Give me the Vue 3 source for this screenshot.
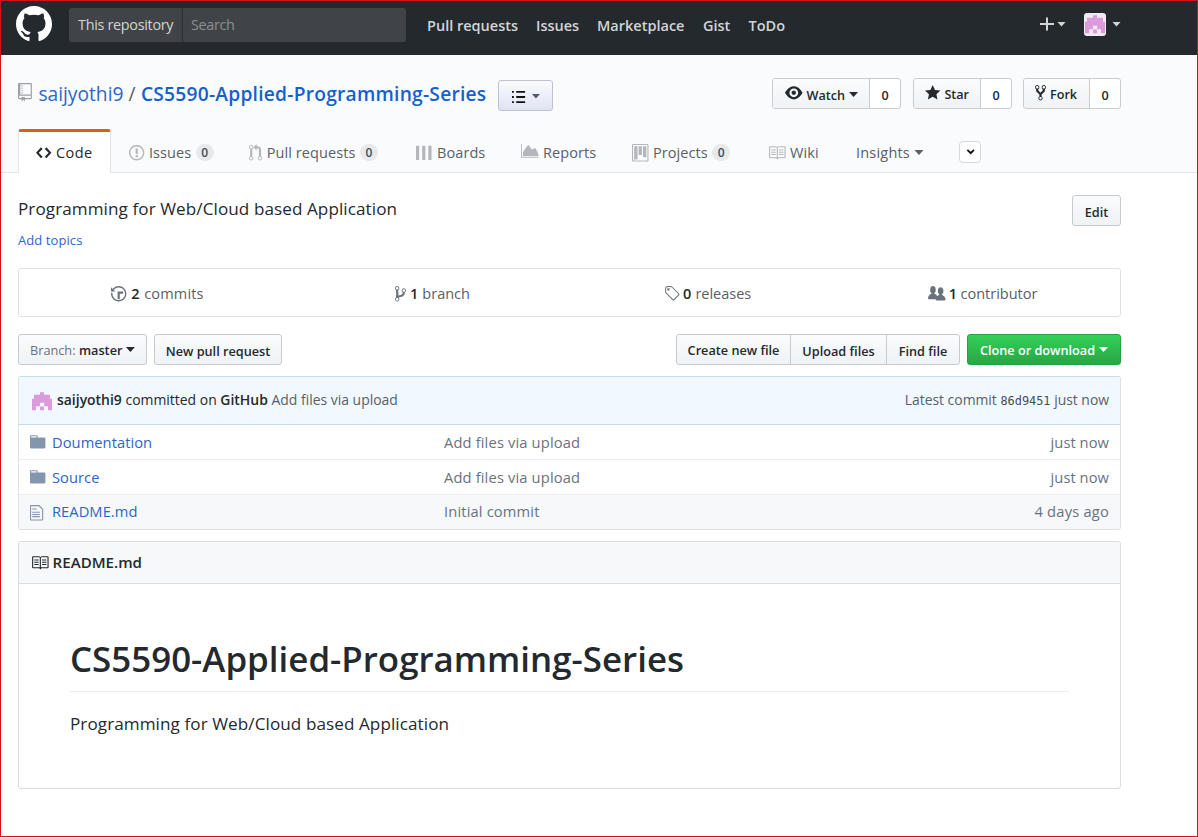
<script setup>
import { h } from 'vue'

const glyphs = {
  mark: [16, 'M8 0C3.58 0 0 3.58 0 8c0 3.54 2.29 6.53 5.47 7.59.4.07.55-.17.55-.38 0-.19-.01-.82-.01-1.49-2.01.37-2.53-.49-2.69-.94-.09-.23-.48-.94-.82-1.13-.28-.15-.68-.52-.01-.53.63-.01 1.08.58 1.23.82.72 1.21 1.87.87 2.33.66.07-.52.28-.87.51-1.07-1.78-.2-3.64-.89-3.64-3.95 0-.87.31-1.59.82-2.15-.08-.2-.36-1.02.08-2.12 0 0 .67-.21 2.2.82.64-.18 1.32-.27 2-.27.68 0 1.36.09 2 .27 1.53-1.04 2.2-.82 2.2-.82.44 1.1.16 1.92.08 2.12.51.56.82 1.27.82 2.15 0 3.07-1.87 3.75-3.65 3.95.29.25.54.73.54 1.48 0 1.07-.01 1.93-.01 2.2 0 .21.15.46.55.38A8.013 8.013 0 0 0 16 8c0-4.42-3.58-8-8-8z'],
  repo: [12, 'M4 9H3V8h1v1zm0-3H3v1h1V6zm0-2H3v1h1V4zm0-2H3v1h1V2zm8-1v12c0 .55-.45 1-1 1H6v2l-1.5-1.5L3 16v-2H1c-.55 0-1-.45-1-1V1c0-.55.45-1 1-1h10c.55 0 1 .45 1 1zm-1 10H1v2h2v-1h3v1h5v-2zm0-10H2v9h9V1z'],
  code: [14, 'M9.5 3L8 4.5 11.5 8 8 11.5 9.5 13 14 8 9.5 3zm-5 0L0 8l4.5 5L6 11.5 2.5 8 6 4.5 4.5 3z'],
  issue: [14, 'M7 2.3c3.14 0 5.7 2.56 5.7 5.7s-2.56 5.7-5.7 5.7A5.71 5.71 0 0 1 1.3 8c0-3.14 2.56-5.7 5.7-5.7zM7 1C3.14 1 0 4.14 0 8s3.14 7 7 7 7-3.14 7-7-3.14-7-7-7zm1 3H6v5h2V4zm0 6H6v2h2v-2z'],
  pull: [12, 'M11 11.28V5c-.03-.78-.34-1.47-.94-2.06C9.46 2.35 8.78 2.03 8 2H7V0L4 3l3 3V4h1c.27.02.48.11.69.31.21.2.3.42.31.69v6.28A1.993 1.993 0 0 0 10 15a1.993 1.993 0 0 0 1-3.72zm-1 2.92c-.66 0-1.2-.55-1.2-1.2 0-.65.55-1.2 1.2-1.2.65 0 1.2.55 1.2 1.2 0 .65-.55 1.2-1.2 1.2zM4 3c0-1.11-.89-2-2-2a1.993 1.993 0 0 0-1 3.72v6.56A1.993 1.993 0 0 0 2 15a1.993 1.993 0 0 0 1-3.72V4.72c.59-.34 1-.98 1-1.72zm-.8 10c0 .66-.55 1.2-1.2 1.2-.65 0-1.2-.55-1.2-1.2 0-.65.55-1.2 1.2-1.2.65 0 1.2.55 1.2 1.2zM2 4.2C1.34 4.2.8 3.65.8 3c0-.65.55-1.2 1.2-1.2.65 0 1.2.55 1.2 1.2 0 .65-.55 1.2-1.2 1.2z'],
  boards: [15, 'M0 1.6h2.9v13H0zM5.6 1.6h2.9v13H5.6zM11.2 1.6h2.9v13h-2.9z'],
  reports: [16, 'M0 0h.8v11.6H16v.9H0zM1.8 10.8V7.4L5.2 2.2 6.6 1l1.6 1.6 1.6 2.6 2-1.4h1.4l2.2 4.4.6 2.6z'],
  project: [15, 'M10 12h3V2h-3v10zm-4-2h3V2H6v8zm-4 4h3V2H2v12zm-1 1h13V1H1v14zM14 0H1a1 1 0 0 0-1 1v14a1 1 0 0 0 1 1h13a1 1 0 0 0 1-1V1a1 1 0 0 0-1-1z'],
  book: [16, 'M3 5h4v1H3V5zm0 3h4V7H3v1zm0 2h4V9H3v1zm11-5h-4v1h4V5zm0 2h-4v1h4V7zm0 2h-4v1h4V9zm2-6v9c0 .55-.45 1-1 1H9.5l-1 1-1-1H2c-.55 0-1-.45-1-1V3c0-.55.45-1 1-1h5.5l1 1 1-1H15c.55 0 1 .45 1 1zm-8 .5L7.5 3H2v9h6V3.5zm7-.5H9.5l-.5.5V12h6V3z'],
  eye: [16, 'M8.06 2C3 2 0 8 0 8s3 6 8.06 6C13 14 16 8 16 8s-3-6-7.94-6zM8 12c-2.2 0-4-1.78-4-4 0-2.2 1.8-4 4-4 2.22 0 4 1.8 4 4 0 2.22-1.78 4-4 4zm2-4c0 1.11-.89 2-2 2-1.11 0-2-.89-2-2 0-1.11.89-2 2-2 1.11 0 2 .89 2 2z'],
  star: [14, 'M14 6l-4.9-.64L7 1 4.9 5.36 0 6l3.6 3.26L2.67 14 7 11.67 11.33 14l-.93-4.74L14 6z'],
  fork: [10, 'M8 1a1.993 1.993 0 0 0-1 3.72V6L5 8 3 6V4.72A1.993 1.993 0 0 0 2 1a1.993 1.993 0 0 0-1 3.72V6.5l3 3v1.78A1.993 1.993 0 0 0 5 15a1.993 1.993 0 0 0 1-3.72V9.5l3-3V4.72A1.993 1.993 0 0 0 8 1zM2 4.2C1.34 4.2.8 3.65.8 3c0-.65.55-1.2 1.2-1.2.65 0 1.2.55 1.2 1.2 0 .65-.55 1.2-1.2 1.2zm3 10c-.66 0-1.2-.55-1.2-1.2 0-.65.55-1.2 1.2-1.2.65 0 1.2.55 1.2 1.2 0 .65-.55 1.2-1.2 1.2zm3-10c-.66 0-1.2-.55-1.2-1.2 0-.65.55-1.2 1.2-1.2.65 0 1.2.55 1.2 1.2 0 .65-.55 1.2-1.2 1.2z'],
  history: [14, 'M8 13H6V6h5v2H8v5zM7 1C4.81 1 2.87 2.02 1.59 3.59L0 2v4h4L2.5 4.5C3.55 3.17 5.17 2.3 7 2.3c3.14 0 5.7 2.56 5.7 5.7s-2.56 5.7-5.7 5.7A5.71 5.71 0 0 1 1.3 8c0-.34.03-.67.09-1H.08C.03 7.33 0 7.66 0 8c0 3.86 3.14 7 7 7s7-3.14 7-7-3.14-7-7-7z'],
  branch: [10, 'M10 5c0-1.11-.89-2-2-2a1.993 1.993 0 0 0-1 3.72v.3c-.02.52-.23.98-.63 1.38-.4.4-.86.61-1.38.63-.83.02-1.48.16-2 .45V4.72a1.993 1.993 0 0 0-1-3.72C.88 1 0 1.89 0 3a2 2 0 0 0 1 1.72v6.56c-.59.35-1 .99-1 1.72 0 1.11.89 2 2 2 1.11 0 2-.89 2-2 0-.53-.2-1-.53-1.36.09-.06.48-.41.59-.47.25-.11.56-.17.94-.17 1.05-.05 1.95-.45 2.75-1.25S8.95 7.77 9 6.73h-.02C9.59 6.37 10 5.73 10 5zM2 1.8c.66 0 1.2.55 1.2 1.2 0 .65-.55 1.2-1.2 1.2C1.35 4.2.8 3.65.8 3c0-.65.55-1.2 1.2-1.2zm0 12.41c-.66 0-1.2-.55-1.2-1.2 0-.65.55-1.2 1.2-1.2.65 0 1.2.55 1.2 1.2 0 .65-.55 1.2-1.2 1.2zm6-8c-.66 0-1.2-.55-1.2-1.2 0-.65.55-1.2 1.2-1.2.65 0 1.2.55 1.2 1.2 0 .65-.55 1.2-1.2 1.2z'],
  tag: [14, 'M7.73 1.73C7.26 1.26 6.62 1 5.96 1H3.5C2.13 1 1 2.13 1 3.5v2.47c0 .66.27 1.3.73 1.77l6.06 6.06c.39.39 1.02.39 1.41 0l4.59-4.59a.996.996 0 0 0 0-1.41L7.73 1.73zM2.38 7.09c-.31-.3-.47-.7-.47-1.13V3.5c0-.88.72-1.59 1.59-1.59h2.47c.42 0 .83.16 1.13.47l6.14 6.13-4.73 4.73-6.13-6.15zM3.01 3h2v2H3V3h.01z'],
  people: [16, 'M16 12.999c0 .439-.45 1-1 1H7.995c-.539 0-.994-.447-.995-.999H1c-.54 0-1-.561-1-1 0-2.634 3-4 3-4s.229-.409 0-1c-.841-.621-1.058-.59-1-3 .058-2.419 1.367-3 2.5-3s2.442.58 2.5 3c.058 2.41-.159 2.379-1 3-.229.59 0 1 0 1s1.549.711 2.42 2.088C9.196 9.369 10 8.999 10 8.999s.229-.409 0-1c-.841-.62-1.058-.59-1-3 .058-2.419 1.367-3 2.5-3s2.437.581 2.495 3c.059 2.41-.158 2.38-1 3-.229.59 0 1 0 1s3.005 1.366 3.005 4z'],
  folder: [14, 'M13 4H7V3c0-.66-.31-1-1-1H1c-.55 0-1 .45-1 1v10c0 .55.45 1 1 1h12c.55 0 1-.45 1-1V5c0-.55-.45-1-1-1zM6 4H1V3h5v1z'],
  file: [12, 'M6 5H2V4h4v1zM2 8h7V7H2v1zm0 2h7V9H2v1zm0 2h7v-1H2v1zm10-7.5V14c0 .55-.45 1-1 1H1c-.55 0-1-.45-1-1V2c0-.55.45-1 1-1h7.5L12 4.5zM11 5L8 2H1v12h10V5z'],
  list: [14, 'M0 2h2v2H0zM4.5 2H14v2H4.5zM0 7.5h2v2H0zM4.5 7.5H14v2H4.5zM0 13h2v2H0zM4.5 13H14v2H4.5z'],
  plus: [14, 'M6 1.5h2V7h6v2H8v5.5H6V9H0V7h6z'],
  avatar: [16, 'M6.4 1h3.2v2h4.8v3.2H16v9.2h-3.2v-3.2h-3V9.4H6.4v2.8H3.2v3.2H0V6.2h1.6V3h4.8zM6.4 12.4h3.2v3H6.4z'],
  chevron: [10, 'M.8 5.8l1.3-1.3L5 7.2l2.9-2.7 1.3 1.3L5 10z'],
}

const Icon = (props) =>
  h('svg', { class: 'icon', width: (glyphs[props.name][0] * props.size) / 16, height: props.size, viewBox: `0 0 ${glyphs[props.name][0]} 16` }, [
    h('path', { d: glyphs[props.name][1], 'fill-rule': 'evenodd' }),
  ])
Icon.props = { name: String, size: { type: Number, default: 17.6 } }

const tabs = [
  { id: 'issues', icon: 'issue', label: 'Issues', count: 0 },
  { id: 'pulls', icon: 'pull', label: 'Pull requests', count: 0 },
  { id: 'boards', icon: 'boards', label: 'Boards' },
  { id: 'reports', icon: 'reports', label: 'Reports' },
  { id: 'projects', icon: 'project', label: 'Projects', count: 0 },
  { id: 'wiki', icon: 'book', label: 'Wiki' },
]
const stats = [
  { icon: 'history', n: 2, label: 'commits' },
  { icon: 'branch', n: 1, label: 'branch' },
  { icon: 'tag', n: 0, label: 'releases' },
  { icon: 'people', n: 1, label: 'contributor' },
]
const files = [
  { icon: 'folder', name: 'Doumentation', msg: 'Add files via upload', age: 'just now' },
  { icon: 'folder', name: 'Source', msg: 'Add files via upload', age: 'just now' },
  { icon: 'file', name: 'README.md', msg: 'Initial commit', age: '4 days ago' },
]
</script>

<template>
  <div class="page">
    <header class="topbar">
      <Icon name="mark" :size="36" class="logo" />
      <div class="search"><span class="scope">This repository</span><span class="query">Search</span></div>
      <nav class="topnav">
        <a class="n-pull">Pull requests</a><a class="n-issues">Issues</a><a class="n-market">Marketplace</a><a class="n-gist">Gist</a><a>ToDo</a>
      </nav>
      <div class="user">
        <Icon name="plus" :size="16" class="plus" /><i class="caret"></i>
        <span class="avatar"><Icon name="avatar" :size="20" /></span><i class="caret"></i>
      </div>
    </header>

    <section class="repohead">
      <div class="titlerow">
        <Icon name="repo" :size="18.5" class="repoicon" />
        <a class="owner">saijyothi9</a><span class="slash">/</span><a class="repo">CS5590-Applied-Programming-Series</a>
        <button class="listbtn"><Icon name="list" :size="15" /><i class="caret"></i></button>
        <div class="actions">
          <div class="social watch"><span class="act"><Icon name="eye" /><b>Watch</b><i class="caret"></i></span><span class="num">0</span></div>
          <div class="social star"><span class="act"><Icon name="star" /><b>Star</b></span><span class="num">0</span></div>
          <div class="social fork"><span class="act"><Icon name="fork" /><b>Fork</b></span><span class="num">0</span></div>
        </div>
      </div>
      <nav class="tabs">
        <a class="tab code"><Icon name="code" /><span>Code</span></a>
        <a v-for="t in tabs" :key="t.id" class="tab" :class="t.id">
          <Icon :name="t.icon" /><span>{{ t.label }}</span><em v-if="t.count !== undefined">{{ t.count }}</em>
        </a>
        <a class="tab insights"><span>Insights</span><i class="caret"></i></a>
        <button class="more"><Icon name="chevron" :size="15" /></button>
      </nav>
    </section>

    <main class="content">
      <div class="about">
        <div>
          <p class="desc">Programming for Web/Cloud based Application</p>
          <a class="topics">Add topics</a>
        </div>
        <button class="btn edit">Edit</button>
      </div>

      <div class="stats">
        <div v-for="s in stats" :key="s.icon" class="stat" :class="s.icon"><Icon :name="s.icon" /><b>{{ s.n }}</b><span>{{ s.label }}</span></div>
      </div>

      <div class="toolbar">
        <button class="btn branchbtn"><span class="muted">Branch:</span><span>master</span><i class="caret"></i></button>
        <button class="btn newpr">New pull request</button>
        <div class="group">
          <button class="btn create">Create new file</button>
          <button class="btn upload">Upload files</button>
          <button class="btn find">Find file</button>
        </div>
        <button class="btn clone"><span>Clone or download</span><i class="caret"></i></button>
      </div>

      <div class="filebox">
        <div class="commit">
          <Icon name="avatar" :size="20" class="pic" />
          <div class="who"><b>saijyothi9</b> committed on <b>GitHub</b> <span>Add files via upload</span></div>
          <div class="latest">Latest commit <code>86d9451</code> just now</div>
        </div>
        <div v-for="f in files" :key="f.name" class="row" :class="f.icon">
          <span class="ico"><Icon :name="f.icon" /></span>
          <a class="fname">{{ f.name }}</a><span class="msg">{{ f.msg }}</span><span class="age">{{ f.age }}</span>
        </div>
      </div>

      <article class="readme">
        <h3><Icon name="book" /><span>README.md</span></h3>
        <div class="body">
          <h1>CS5590-Applied-Programming-Series</h1>
          <p>Programming for Web/Cloud based Application</p>
        </div>
      </article>
    </main>
  </div>
</template>

<style>
body { margin: 0; background: #fff; }
</style>

<style scoped>
.page, .page * { box-sizing: border-box; }
.page { width: 1198px; height: 837px; border: 1px solid #d01418; overflow: hidden; background: #fff; color: #24292e; font: 14.5px/22px "Open Sans", "Noto Sans", sans-serif; white-space: nowrap; }
button { font-family: inherit; color: inherit; margin: 0; }
b { font-weight: 600; }
p, h1, h3 { margin: 0; }
.icon { display: block; flex: none; fill: currentColor; overflow: visible; }
.caret { flex: none; width: 9px; height: 5px; background: currentColor; clip-path: polygon(0 0, 100% 0, 50% 100%); }

.topbar { height: 54px; background: #24292e; display: flex; align-items: flex-start; padding-left: 15px; color: #d3d4d5; }
.logo { color: #fff; margin-top: 5px; }
.search { display: flex; width: 337px; height: 34px; margin: 7px 0 0 17px; border-radius: 3px; background: #404448; line-height: 34px; overflow: hidden; }
.scope { width: 114px; padding-left: 9px; border-right: 1px solid #2b3035; font-size: 14.4px; letter-spacing: -.3px; color: #d3d5d6; }
.query { padding-left: 8px; font-size: 14.4px; letter-spacing: -.35px; color: #8b8f92; }
.topnav { display: flex; margin: 13px 0 0 21px; font-weight: 600; font-size: 14.5px; line-height: 24px; }
.n-pull { width: 109px; } .n-issues { width: 61px; } .n-market { width: 106px; } .n-gist { width: 45.5px; }
.user { display: flex; align-items: center; height: 26px; margin: 10px 76px 0 auto; }
.plus { margin-right: 3px; }
.avatar { display: flex; align-items: center; justify-content: center; width: 22px; height: 23px; border-radius: 3px; background: #f2eaf2; color: #dc9bdc; margin: 0 6px 0 18px; overflow: hidden; }

.repohead { height: 118px; background: #fafbfc; border-bottom: 1px solid #e1e4e8; display: flex; flex-direction: column; justify-content: space-between; padding-left: 17px; }
.titlerow { display: flex; align-items: flex-start; width: 1103px; padding-top: 23px; font-size: 19.2px; line-height: 32px; color: #0366d6; }
.repoicon { color: #9da2a8; margin-top: 5px; }
.owner { width: 90px; margin-left: 6.5px; color: #2d66c8; }
.slash { width: 12.5px; color: #586069; }
.repo { width: 357px; font-weight: 600; color: #1460cc; letter-spacing: .24px; }
.listbtn { display: flex; align-items: center; justify-content: center; gap: 6px; width: 55px; height: 31px; margin-top: 2px; padding: 2px 0 0 2px; border: 1px solid #bcc2cf; border-radius: 3px; background: linear-gradient(#fafbfe, #dfe4f4); color: #111; }
.listbtn .caret { color: #555b63; margin-top: -1px; }
.actions { display: flex; margin-left: auto; font-size: 12.6px; line-height: 31px; color: #24292e; }
.social { display: flex; height: 31px; border: 1px solid #c9cccf; border-radius: 3px; background: #fff; overflow: hidden; }
.watch { width: 129px; margin-right: 12px; } .star { width: 99px; margin-right: 11px; } .fork { width: 98px; }
.act { display: flex; flex: 1; border-right: 1px solid #c9cccf; background: linear-gradient(#fafbfc, #eff3f6); padding-left: 12px; }
.star .act, .fork .act { padding-left: 11px; }
.act .icon { margin-top: 5px; }
.act b { margin-left: 4px; }
.watch .act b { line-height: 33px; }
.act .caret { margin: 13px 0 0 4px; }
.num { width: 30px; text-align: center; font-weight: 600; line-height: 33px; }

.tabs { display: flex; height: 44px; margin-bottom: -1px; color: #586069; }
.tab { display: flex; align-items: center; padding-top: 3px; gap: 4.5px; flex: none; letter-spacing: .08px; }
.tab .icon { color: #b3b7bb; }
.tab em { width: 18px; height: 17px; border-radius: 9px; background: #e8e9eb; color: #444d56; text-align: center; font: 600 12px/17px "Open Sans", sans-serif; }
.code { width: 93px; margin-right: 18px; padding: 0 0 0 17px; border: 1px solid #e1e4e8; border-top: 3px solid #d9600f; border-bottom: 0; border-radius: 3px 3px 0 0; background: #fff; color: #24292e; letter-spacing: .5px; }
.code .icon { color: #24292e; }
.issues { width: 119px; } .pulls { width: 168px; padding-left: 1px; } .boards { width: 105px; } .reports { width: 111px; } .projects { width: 136px; } .wiki { width: 88px; } .insights { width: 103px; letter-spacing: .2px; }
.more { display: flex; align-items: center; justify-content: center; width: 22px; height: 22px; margin-top: 12px; padding: 0 0 0 1px; border: 1px solid #d5d9dd; border-radius: 4px; background: #fff; color: #111; }

.content { width: 1103px; margin-left: 17px; }
.about { display: flex; justify-content: space-between; height: 95px; padding-top: 22px; }
.desc { font-size: 17.1px; line-height: 28px; letter-spacing: .08px; }
.topics { display: block; margin-top: 6px; font-size: 13px; letter-spacing: .08px; color: #2d66c8; }
.btn { display: flex; align-items: center; justify-content: center; height: 31px; padding: 2px 0 0; border: 1px solid #c6cacd; border-radius: 3px; background: linear-gradient(#fafbfc, #eff3f6); font-size: 12.7px; font-weight: 600; line-height: 20px; flex: none; }
.edit { width: 49px; }
.stats { display: flex; height: 49px; border: 1px solid #dfe2e5; border-radius: 3px; }
.stat { display: flex; flex: 1; align-items: center; justify-content: center; gap: 4px; color: #586069; padding-top: 2px; }
.stat.history { letter-spacing: .15px; gap: 4.5px; padding-left: 1px; }
.stat.people { gap: 3.5px; }
.stat b { color: #24292e; }
.stat .icon { color: #6a737d; }
.toolbar { display: flex; margin: 17px 0 11px; }
.branchbtn { width: 129px; gap: 3.5px; padding-top: 0; } .muted { color: #6a737d; font-weight: 400; }
.newpr { width: 128px; margin-left: 7px; }
.group { display: flex; margin-left: auto; }
.create { width: 115px; border-radius: 3px 0 0 3px; padding-top: 0; } .upload { width: 97px; border-radius: 0; margin-left: -1px; } .find { width: 74px; border-radius: 0 3px 3px 0; margin-left: -1px; }
.clone { width: 154px; margin-left: 7px; gap: 4px; padding-top: 0; color: #fff; border-color: #28a03e; background: linear-gradient(#34d058, #28a745); }

.filebox { border: 1px solid #dfe2e5; border-top-color: #c8dcf0; border-radius: 3px; overflow: hidden; }
.commit { display: flex; align-items: center; height: 48px; padding: 0 11px 2px 13px; background: #f1f8ff; border-bottom: 1px solid #c8dcf0; font-size: 13.95px; }
.pic { color: #dc9bdc; margin-top: 2px; }
.who { margin-left: 5px; } .who span { color: #586069; }
.latest { margin-left: auto; color: #586069; font-size: 13.9px; }
.latest code { font: 11.9px "DejaVu Sans Mono", monospace; color: #444d56; }
.row { display: flex; align-items: center; height: 35px; padding: 0 11px 1px; border-bottom: 1px solid #eaecef; font-size: 14.7px; letter-spacing: .05px; }
.row:last-child { height: 34px; padding-bottom: 0; border: 0; background: #f6f8fa; }
.row:last-child .fname, .row:last-child .msg, .row:last-child .age { line-height: 21px; padding-bottom: 1px; }
.ico { width: 22px; padding-top: 1px; color: #8496ae; }
.fname { width: 392px; color: #2d66c8; }
.msg, .age { color: #6a737d; }
.msg { letter-spacing: .15px; }
.age { margin-left: auto; }
.file .age { letter-spacing: .2px; }

.readme { height: 248px; margin-top: 11px; border: 1px solid #dadde0; border-radius: 3px; overflow: hidden; }
.readme h3 { display: flex; align-items: center; gap: 4px; height: 42px; padding-left: 12px; background: #f6f8fa; border-bottom: 1px solid #dadde0; font-size: 15.1px; font-weight: 600; }
.readme h3 span { padding-bottom: 2px; }
.body { padding: 49px 51px 0; }
.body h1 { height: 59px; border-bottom: 1px solid #eaecef; font-size: 34.9px; font-weight: 600; line-height: 52px; }
.body p { margin-top: 18px; font-size: 17.1px; line-height: 28px; letter-spacing: .08px; }
</style>
